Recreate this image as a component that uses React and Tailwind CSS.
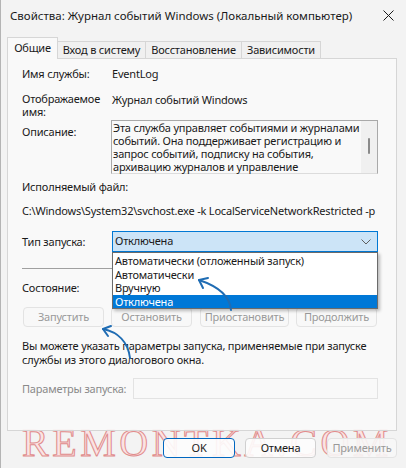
import React from "react";

const font = { fontFamily: '"Noto Sans", "Open Sans", sans-serif' };

function Tab({ label, active, w }) {
  if (active) {
    return (
      <div className={"relative z-10 -mb-px h-[22px] flex items-center justify-center bg-[#f9f9f9] border border-b-0 border-[#d6d6d6] " + w}>
        {label}
      </div>
    );
  }
  return (
    <div className={"h-[17px] flex items-center justify-center bg-[#f0f0f0] border border-b-0 border-l-0 border-[#d6d6d6] " + w}>
      {label}
    </div>
  );
}

function Btn({ label, w, disabled, primary }) {
  return (
    <div
      className={
        "h-[20px] flex items-center justify-center rounded-[4px] border " +
        (primary
          ? "border-[#0067c0] bg-[#fdfdfd]/90 text-[#1a1a1a] "
          : disabled
          ? "border-[#e3e3e3] bg-[#f7f7f7]/90 text-[#9a9a9a] "
          : "border-[#d0d0d0] bg-[#fdfdfd]/90 text-[#1a1a1a] ") +
        w
      }
    >
      {label}
    </div>
  );
}

export default function App() {
  const options = [
    "Автоматически (отложенный запуск)",
    "Автоматически",
    "Вручную",
    "Отключена",
  ];

  return (
    <div
      className="relative w-[406px] h-[468px] overflow-hidden bg-[#f3f3f3] border-l border-[#b4b4b4] text-[#1a1a1a] text-[11px] tracking-[-0.2px] whitespace-nowrap"
      style={font}
    >
      {/* Title bar */}
      <div className="h-[31px] flex items-center justify-between pl-[9px] pr-[12px]">
        <span className="text-[11.5px] tracking-normal leading-none">
          Свойства: Журнал событий Windows (Локальный компьютер)
        </span>
        <svg width="11" height="11" viewBox="0 0 11 11">
          <path d="M0.5 0.5 L10.5 10.5 M10.5 0.5 L0.5 10.5" stroke="#1a1a1a" strokeWidth="1" />
        </svg>
      </div>

      {/* Tabs */}
      <div className="mt-[6px] ml-[6px] h-[21px] flex items-end">
        <Tab label="Общие" w="w-[51px]" active />
        <Tab label="Вход в систему" w="w-[88px]" />
        <Tab label="Восстановление" w="w-[96px]" />
        <Tab label="Зависимости" w="w-[79px]" />
      </div>

      {/* Watermark, sits behind the panel edge and footer buttons */}
      <div
        className="pointer-events-none absolute left-[20px] top-[423px] w-[372px] text-center text-[40px] leading-[40px] tracking-[3.5px] text-[#fbe3e3] [-webkit-text-stroke:1px_#e08c8c]"
        style={{ fontFamily: '"Liberation Serif", serif' }}
      >
        REMONTKA.COM
      </div>

      {/* Panel */}
      <div className="relative ml-[6px] w-[390px] h-[373px] bg-[#f9f9f9]/90 border border-[#d6d6d6] px-[14px]">
        <div className="mt-[7px] flex leading-[16px]">
          <div className="w-[90px]">Имя службы:</div>
          <div>EventLog</div>
        </div>

        <div className="mt-[10px] flex">
          <div className="w-[90px] leading-[13px]">
            Отображаемое
            <br />
            имя:
          </div>
          <div className="leading-[16px]">Журнал событий Windows</div>
        </div>

        <div className="mt-[2px] flex">
          <div className="w-[89px] mt-[4px] leading-[16px]">Описание:</div>
          <div className="w-[267px] h-[54px] flex border border-[#a9a9a9] border-b-[#dcdcdc] bg-[#f9f9f9]">
            <div className="flex-1 pl-[1px] leading-[13px]">
              Эта служба управляет событиями и журналами
              <br />
              событий. Она поддерживает регистрацию и
              <br />
              запрос событий, подписку на события,
              <br />
              архивацию журналов и управление
            </div>
            <div className="w-[16px] bg-[#f0f0f0] flex justify-center pt-[17px]">
              <div className="w-[2px] h-[16px] rounded-full bg-[#8a8a8a]" />
            </div>
          </div>
        </div>

        <div className="mt-[5px] leading-[16px]">Исполняемый файл:</div>
        <div className="mt-[8px] leading-[16px]">
          C:\Windows\System32\svchost.exe -k LocalServiceNetworkRestricted -p
        </div>

        <div className="mt-[12px] flex items-center">
          <div className="w-[90px] leading-[16px]">Тип запуска:</div>
          <div className="relative w-[266px] h-[21px] bg-[#cce4f7] border border-[#0078d4] flex items-center justify-between pl-[2px] pr-[6px]">
            <span>Отключена</span>
            <svg width="10" height="6" viewBox="0 0 10 6">
              <path d="M0.5 0.5 L5 5 L9.5 0.5" fill="none" stroke="#606060" strokeWidth="1" />
            </svg>
            <div className="absolute left-[-1px] top-[20px] w-[266px] h-[57px] z-20 bg-white border border-[#6b6b6b] shadow-[2px_2px_3px_rgba(0,0,0,0.25)] py-px">
              {options.map((o) => (
                <div
                  key={o}
                  className={
                    "h-[13.5px] leading-[13.5px] pl-[2px] " +
                    (o === "Отключена" ? "bg-[#0078d7] text-white" : "text-[#1a1a1a]")
                  }
                >
                  {o}
                </div>
              ))}
            </div>
          </div>
        </div>

        <div className="mt-[16px] h-px bg-[#a0a0a0] w-[356px]" />

        <div className="mt-[11px] leading-[16px]">Состояние:</div>

        <div className="mt-[11px] ml-px flex">
          <Btn label="Запустить" w="w-[81px]" disabled />
          <div className="w-[7px]" />
          <Btn label="Остановить" w="w-[81px]" disabled />
          <div className="w-[8px]" />
          <Btn label="Приостановить" w="w-[89px]" disabled />
          <div className="w-[7px]" />
          <Btn label="Продолжить" w="w-[81px]" disabled />
        </div>

        <div className="mt-[12px] leading-[14px]">
          Вы можете указать параметры запуска, применяемые при запуске
          <br />
          службы из этого диалогового окна.
        </div>

        <div className="mt-[11px] flex items-center">
          <div className="w-[111px] text-[#8a8a8a] leading-[16px]">Параметры запуска:</div>
          <div className="w-[245px] h-[21px] border border-[#e3e3e3] bg-[#f9f9f9]" />
        </div>
      </div>

      {/* Footer buttons */}
      <div className="relative mt-[7px] flex justify-end pr-[9px]">
        <Btn label="OK" w="w-[72px]" primary />
        <div className="w-[10px]" />
        <Btn label="Отмена" w="w-[71px]" />
        <div className="w-[11px]" />
        <Btn label="Применить" w="w-[70px]" disabled />
      </div>

      {/* Arrows */}
      <svg
        className="pointer-events-none absolute left-0 top-0 z-30"
        width="406"
        height="468"
        viewBox="0 0 406 468"
      >
        <g fill="none" stroke="#1f6cb3" strokeWidth="2" strokeLinecap="round" strokeLinejoin="round">
          <path d="M230 310 C229 296 216 286 198 280" />
          <path d="M198 280 L207 278 M198 280 L202 288" />
          <path d="M129 358 C127 342 117 332 102 329" />
          <path d="M102 329 L110 326 M102 329 L107 336" />
        </g>
      </svg>
    </div>
  );
}
